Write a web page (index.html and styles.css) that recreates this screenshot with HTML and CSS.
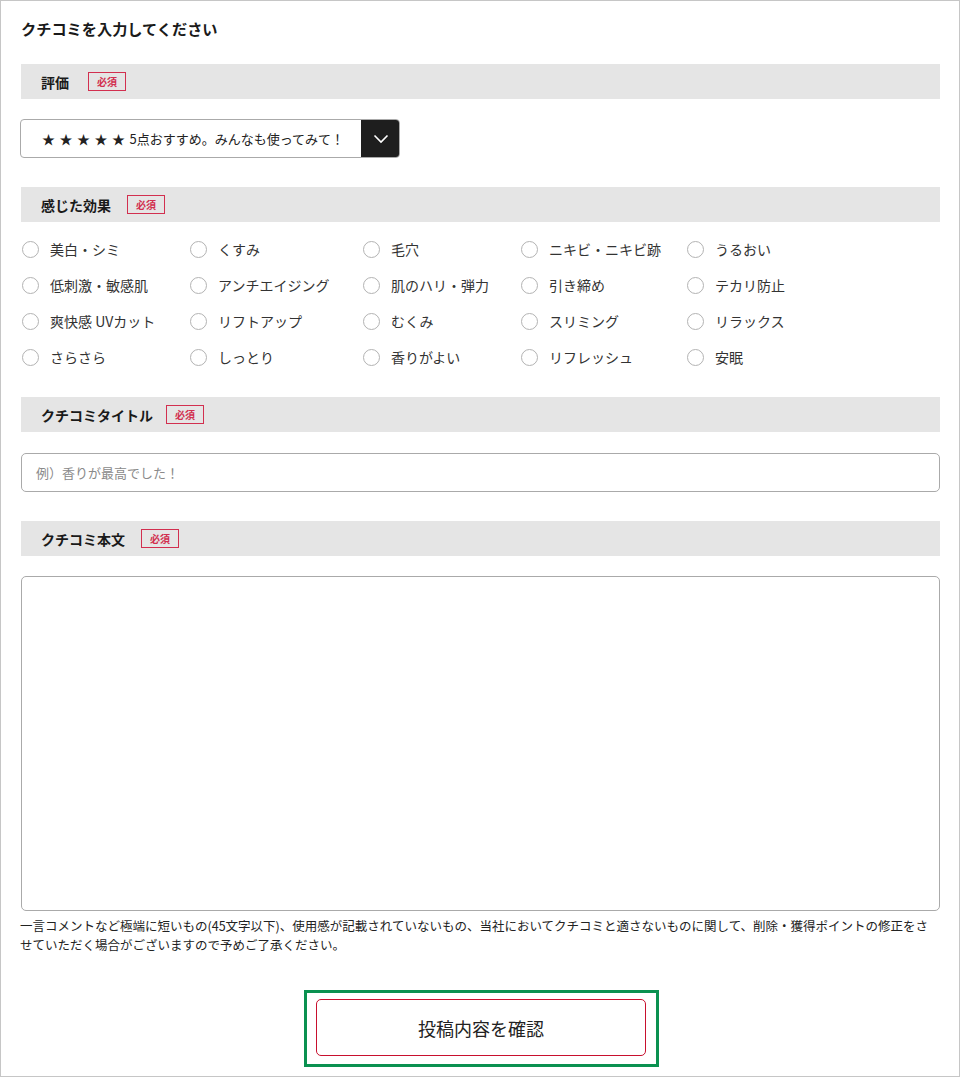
FILE: index.html
```html
<!DOCTYPE html>
<html lang="ja">
<head>
<meta charset="utf-8">
<title>クチコミを入力してください</title>
<link rel="stylesheet" href="styles.css">
</head>
<body>
<div class="page">
  <h1 class="page-title">クチコミを入力してください</h1>

  <div class="sec-head sec-rating"><span class="sec-label">評価</span><span class="req">必須</span></div>
  <div class="select">
    <div class="select-text"><span class="stars">★ ★ ★ ★ ★ </span>5点おすすめ。みんなも使ってみて！</div>
    <div class="select-btn">
      <svg width="16" height="10" viewBox="0 0 16 10"><polyline points="1.5,1.5 8,8 14.5,1.5" fill="none" stroke="#fff" stroke-width="1.6"/></svg>
    </div>
  </div>

  <div class="sec-head sec-effect"><span class="sec-label">感じた効果</span><span class="req">必須</span></div>
  <div class="effects">
    <label class="opt"><span class="radio"></span>美白・シミ</label>
    <label class="opt"><span class="radio"></span>くすみ</label>
    <label class="opt"><span class="radio"></span>毛穴</label>
    <label class="opt"><span class="radio"></span>ニキビ・ニキビ跡</label>
    <label class="opt"><span class="radio"></span>うるおい</label>

    <label class="opt"><span class="radio"></span>低刺激・敏感肌</label>
    <label class="opt"><span class="radio"></span>アンチエイジング</label>
    <label class="opt"><span class="radio"></span>肌のハリ・弾力</label>
    <label class="opt"><span class="radio"></span>引き締め</label>
    <label class="opt"><span class="radio"></span>テカリ防止</label>

    <label class="opt"><span class="radio"></span>爽快感 UVカット</label>
    <label class="opt"><span class="radio"></span>リフトアップ</label>
    <label class="opt"><span class="radio"></span>むくみ</label>
    <label class="opt"><span class="radio"></span>スリミング</label>
    <label class="opt"><span class="radio"></span>リラックス</label>

    <label class="opt"><span class="radio"></span>さらさら</label>
    <label class="opt"><span class="radio"></span>しっとり</label>
    <label class="opt"><span class="radio"></span>香りがよい</label>
    <label class="opt"><span class="radio"></span>リフレッシュ</label>
    <label class="opt"><span class="radio"></span>安眠</label>
  </div>

  <div class="sec-head sec-title"><span class="sec-label">クチコミタイトル</span><span class="req">必須</span></div>
  <div class="text-input"><span class="placeholder">例）香りが最高でした！</span></div>

  <div class="sec-head sec-body"><span class="sec-label">クチコミ本文</span><span class="req">必須</span></div>
  <div class="textarea"></div>
  <p class="note">一言コメントなど極端に短いもの(45文字以下)、使用感が記載されていないもの、当社においてクチコミと適さないものに関して、削除・獲得ポイントの修正をさせていただく場合がございますので予めご了承ください。</p>

  <div class="submit-wrap">
    <div class="submit-frame">
      <div class="submit-btn">投稿内容を確認</div>
    </div>
  </div>
</div>
</body>
</html>
```

FILE: styles.css
```css
* { box-sizing: border-box; }
html, body { margin: 0; padding: 0; background: #fff; }
body {
  font-family: "Noto Sans CJK JP", "Noto Sans", "Liberation Sans", sans-serif;
  color: #222;
}
.page {
  width: 960px;
  height: 1077px;
  border: 1px solid #c6c6c6;
  padding: 16px 19px 0 20px;
  overflow: hidden;
}
.page-title {
  margin: 0;
  font-size: 15.2px;
  line-height: 22px;
  font-weight: bold;
  color: #1a1a1a;
}
.sec-head {
  height: 35px;
  background: #e5e5e5;
  display: flex;
  align-items: center;
  padding-left: 20px;
  gap: 19px;
}
.sec-rating { margin-top: 25px; }
.sec-effect { margin-top: 29px; }
.sec-title { margin-top: 22px; }
.sec-body { margin-top: 29px; }
.sec-label {
  font-size: 14px;
  font-weight: bold;
  color: #1a1a1a;
  line-height: 20px;
}
.sec-effect .sec-label { margin-right: -3px; }
.sec-title .sec-label { margin-right: -6px; }
.sec-body .sec-label { margin-right: -3px; }
.req {
  display: flex;
  align-items: center;
  justify-content: center;
  width: 38px;
  height: 19px;
  border: 1px solid #d22f4f;
  color: #d22f4f;
  font-size: 10px;
  font-weight: bold;
  line-height: 1;
}
.select {
  margin-top: 20px;
  margin-left: -1px;
  width: 380px;
  height: 39px;
  display: flex;
  border: 1px solid #aaa;
  border-radius: 4px;
  overflow: hidden;
}
.select-text {
  flex: 1;
  display: flex;
  align-items: center;
  justify-content: center;
  font-size: 13px;
  color: #222;
  padding-left: 4px;
  white-space: pre;
}
.stars {
  letter-spacing: 0.8px;
}
.select-btn {
  width: 39px;
  background: #1e1e1e;
  display: flex;
  align-items: center;
  justify-content: center;
  margin: -1px -1px -1px 0;
}
.effects {
  padding-top: 9px;
  display: grid;
  grid-template-columns: 168px 173px 158px 166px auto;
  grid-auto-rows: 36px;
}
.opt {
  display: flex;
  align-items: center;
  font-size: 14px;
  color: #333;
  white-space: nowrap;
}
.radio {
  width: 17px;
  height: 17px;
  border: 1px solid #b3b3b3;
  border-radius: 50%;
  margin-left: 1px;
  margin-right: 11px;
  flex: none;
}
.text-input {
  margin-top: 21px;
  height: 39px;
  border: 1px solid #aaa;
  border-radius: 5px;
  display: flex;
  align-items: center;
  padding-left: 14px;
}
.placeholder {
  font-size: 13px;
  color: #8a8a8a;
}
.textarea {
  margin-top: 20px;
  height: 335px;
  border: 1px solid #aaa;
  border-radius: 5px;
}
.note {
  margin: 5px 0 0 -1px;
  font-size: 12.5px;
  line-height: 19px;
  color: #222;
}
.submit-wrap {
  margin-top: 36px;
  display: flex;
  justify-content: center;
  padding-left: 2px;
}
.submit-frame {
  border: 3px solid #0a9150;
  padding: 6px 10px 8px 9px;
}
.submit-btn {
  width: 330px;
  height: 57px;
  border: 1px solid #c8102e;
  border-radius: 5px;
  display: flex;
  align-items: center;
  justify-content: center;
  font-size: 18px;
  color: #222;
}
```
